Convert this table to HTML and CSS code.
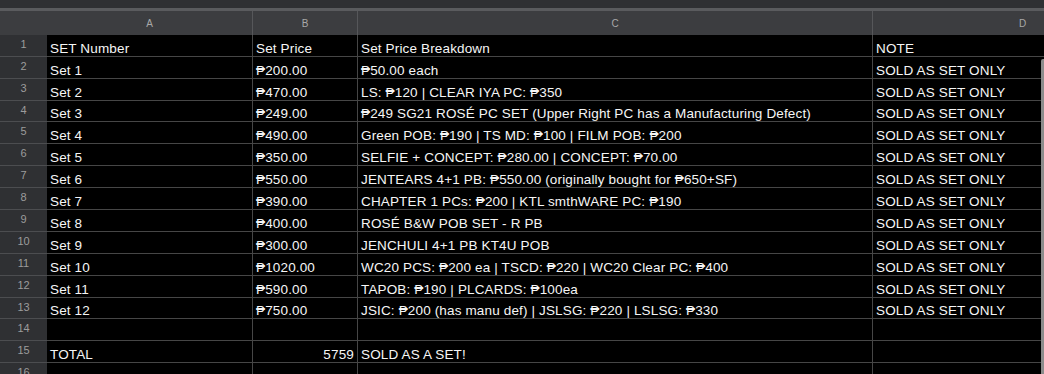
FILE: index.html
```html
<!DOCTYPE html>
<html>
<head>
<meta charset="utf-8">
<link rel="stylesheet" href="styles.css">
</head>
<body>
<div class="sheet">
  <div class="topbar"></div>
  <div class="topline"></div>
  <div class="row head">
    <div class="rh"></div>
    <div class="ch">A</div>
    <div class="ch">B</div>
    <div class="ch">C</div>
    <div class="ch">D</div>
  </div>
  <div class="row">
    <div class="rh">1</div><div class="c">SET Number</div><div class="c">Set Price</div><div class="c">Set Price Breakdown</div><div class="c">NOTE</div>
  </div>
  <div class="row">
    <div class="rh">2</div><div class="c">Set 1</div><div class="c">₱200.00</div><div class="c">₱50.00 each</div><div class="c">SOLD AS SET ONLY</div>
  </div>
  <div class="row">
    <div class="rh">3</div><div class="c">Set 2</div><div class="c">₱470.00</div><div class="c">LS: ₱120 | CLEAR IYA PC: ₱350</div><div class="c">SOLD AS SET ONLY</div>
  </div>
  <div class="row short">
    <div class="rh">4</div><div class="c">Set 3</div><div class="c">₱249.00</div><div class="c">₱249 SG21 ROSÉ PC SET (Upper Right PC has a Manufacturing Defect)</div><div class="c">SOLD AS SET ONLY</div>
  </div>
  <div class="row">
    <div class="rh">5</div><div class="c">Set 4</div><div class="c">₱490.00</div><div class="c">Green POB: ₱190 | TS MD: ₱100 | FILM POB: ₱200</div><div class="c">SOLD AS SET ONLY</div>
  </div>
  <div class="row">
    <div class="rh">6</div><div class="c">Set 5</div><div class="c">₱350.00</div><div class="c">SELFIE + CONCEPT: ₱280.00 | CONCEPT: ₱70.00</div><div class="c">SOLD AS SET ONLY</div>
  </div>
  <div class="row">
    <div class="rh">7</div><div class="c">Set 6</div><div class="c">₱550.00</div><div class="c">JENTEARS 4+1 PB: ₱550.00 (originally bought for ₱650+SF)</div><div class="c">SOLD AS SET ONLY</div>
  </div>
  <div class="row">
    <div class="rh">8</div><div class="c">Set 7</div><div class="c">₱390.00</div><div class="c">CHAPTER 1 PCs: ₱200 | KTL smthWARE PC: ₱190</div><div class="c">SOLD AS SET ONLY</div>
  </div>
  <div class="row">
    <div class="rh">9</div><div class="c">Set 8</div><div class="c">₱400.00</div><div class="c">ROSÉ B&amp;W POB SET - R PB</div><div class="c">SOLD AS SET ONLY</div>
  </div>
  <div class="row">
    <div class="rh">10</div><div class="c">Set 9</div><div class="c">₱300.00</div><div class="c">JENCHULI 4+1 PB KT4U POB</div><div class="c">SOLD AS SET ONLY</div>
  </div>
  <div class="row">
    <div class="rh">11</div><div class="c">Set 10</div><div class="c">₱1020.00</div><div class="c">WC20 PCS: ₱200 ea | TSCD: ₱220 | WC20 Clear PC: ₱400</div><div class="c">SOLD AS SET ONLY</div>
  </div>
  <div class="row">
    <div class="rh">12</div><div class="c">Set 11</div><div class="c">₱590.00</div><div class="c">TAPOB: ₱190 | PLCARDS: ₱100ea</div><div class="c">SOLD AS SET ONLY</div>
  </div>
  <div class="row short">
    <div class="rh">13</div><div class="c">Set 12</div><div class="c">₱750.00</div><div class="c">JSIC: ₱200 (has manu def) | JSLSG: ₱220 | LSLSG: ₱330</div><div class="c">SOLD AS SET ONLY</div>
  </div>
  <div class="row">
    <div class="rh">14</div><div class="c"></div><div class="c"></div><div class="c"></div><div class="c"></div>
  </div>
  <div class="row">
    <div class="rh">15</div><div class="c">TOTAL</div><div class="c num">5759</div><div class="c">SOLD AS A SET!</div><div class="c"></div>
  </div>
  <div class="row">
    <div class="rh">16</div><div class="c"></div><div class="c"></div><div class="c"></div><div class="c"></div>
  </div>
  <div class="scrollbar"></div>
</div>
</body>
</html>
```

FILE: styles.css
```css
html, body {
  margin: 0;
  padding: 0;
  background: #000;
  overflow: hidden;
  width: 1044px;
  height: 374px;
}

.sheet {
  position: relative;
  width: 1044px;
  height: 374px;
  overflow: hidden;
  font-family: "Liberation Sans", Arial, sans-serif;
}

.topbar {
  height: 8px;
  background: #2f3033;
}

.topline {
  height: 3px;
  background: #5a5b5e;
}

.row {
  display: grid;
  grid-template-columns: 47px 206px 105px 515px 300px;
  height: 22px;
  box-sizing: border-box;
}

.row.short {
  height: 21px;
}

.row.head {
  height: 24px;
  background: #3c3d40;
}

.rh {
  background: #2f3033;
  color: #9c9c9c;
  font-size: 11px;
  line-height: 13px;
  text-align: center;
  padding-top: 3px;
  box-sizing: border-box;
  border-bottom: 1px solid #4c4d50;
}

.head .rh {
  background: #3c3d40;
  border-bottom: none;
}

.ch {
  color: #a8a8a8;
  font-size: 10px;
  display: flex;
  align-items: center;
  justify-content: center;
  border-right: 1px solid #56575a;
}

.c {
  box-sizing: border-box;
  border-right: 1px solid #464646;
  border-bottom: 1px solid #464646;
  color: #f6f6f6;
  font-size: 13.5px;
  letter-spacing: 0.15px;
  line-height: 15px;
  padding: 0 3px 0 3px;
  display: flex;
  align-items: flex-end;
  white-space: nowrap;
  overflow: hidden;
}

.c.num {
  justify-content: flex-end;
  padding-right: 3px;
}

.scrollbar {
  position: absolute;
  right: 0;
  top: 59px;
  width: 3px;
  height: 320px;
  background: #8c8c8c;
  border-radius: 2px 0 0 0;
}
```
